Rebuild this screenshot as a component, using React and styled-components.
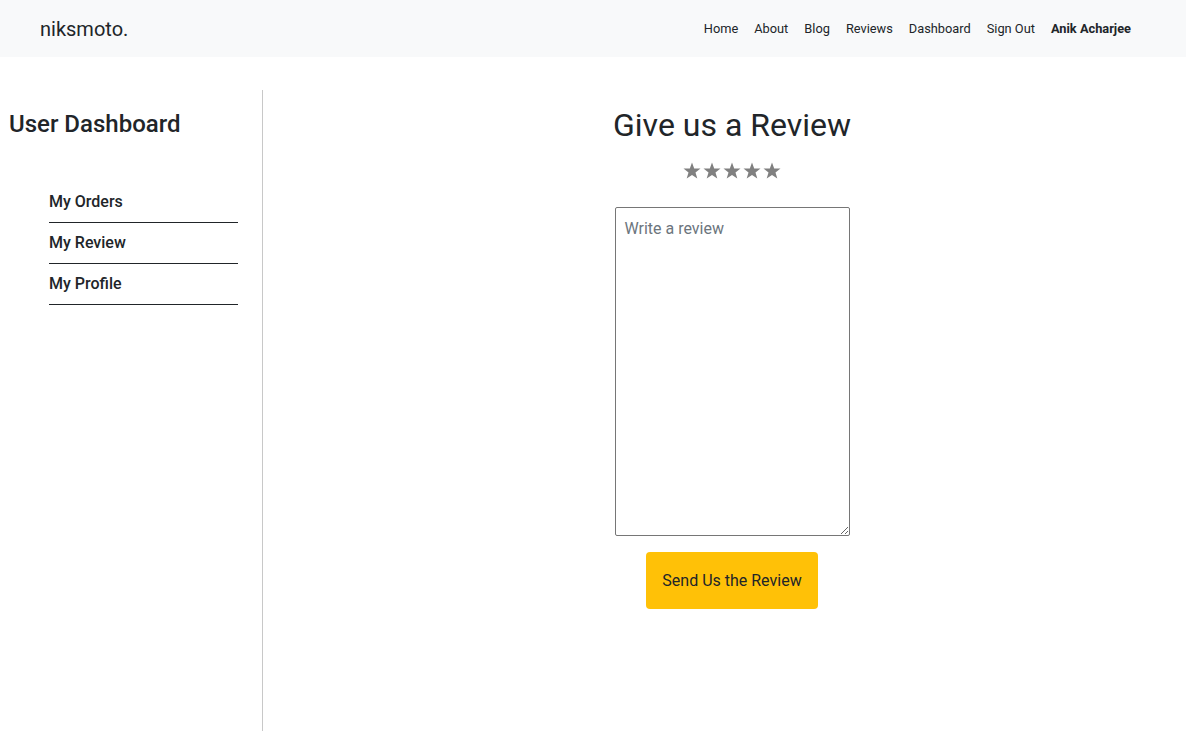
import React from 'react';
import styled, { createGlobalStyle } from 'styled-components';

const GlobalStyle = createGlobalStyle`
  body {
    margin: 0;
    font-family: Roboto, "Liberation Sans", sans-serif;
    color: #212529;
    background: #fff;
  }
`;

const NavBar = styled.nav`
  display: flex;
  align-items: center;
  justify-content: space-between;
  height: 57px;
  padding: 0 55px 0 40px;
  background-color: #f8f9fa;
`;

const Brand = styled.div`
  font-size: 20px;
  color: #212529;
`;

const NavLinks = styled.div`
  display: flex;
  gap: 16px;
  font-size: 12.8px;
`;

const NavLink = styled.a`
  color: #212529;
  text-decoration: none;
  font-weight: ${props => (props.bold ? 700 : 400)};
`;

const Body = styled.div`
  display: flex;
  margin-top: 33px;
`;

const Sidebar = styled.aside`
  width: 262px;
  min-height: calc(100vh - 90px);
  border-right: 1px solid #c8c8c8;
  flex-shrink: 0;
`;

const SideTitle = styled.h2`
  margin: 0;
  padding: 20px 0 0 9px;
  font-size: 24px;
  font-weight: 500;
  line-height: 1.2;
`;

const Menu = styled.ul`
  list-style: none;
  margin: 0;
  padding: 43px 0 0 49px;
  width: 189px;
`;

const MenuItem = styled.li`
  padding: 8px 0 8px;
  font-size: 16px;
  font-weight: 500;
  line-height: 24px;
  border-bottom: 1px solid #212529;
`;

const Main = styled.main`
  flex: 1;
  display: flex;
  flex-direction: column;
  align-items: center;
  padding: 16px 0 0 15px;
`;

const Title = styled.h1`
  margin: 0;
  font-size: 32px;
  font-weight: 400;
  line-height: 1.2;
  color: #212529;
`;

const Stars = styled.div`
  display: flex;
  margin-top: 17px;
  height: 20px;
`;

const ReviewBox = styled.textarea`
  margin-top: 26px;
  width: 235px;
  height: 329px;
  box-sizing: border-box;
  padding: 9px 9px;
  border: 1px solid #767676;
  border-radius: 2px;
  font-family: Roboto, "Liberation Sans", sans-serif;
  font-size: 16px;
  line-height: 24px;
  color: #212529;
  &::placeholder {
    color: #6c757d;
  }
`;

const SendButton = styled.button`
  margin-top: 16px;
  padding: 17px 16px 16px;
  border: none;
  border-radius: 4px;
  background-color: #ffc107;
  color: #212529;
  font-family: Roboto, "Liberation Sans", sans-serif;
  font-size: 16px;
  line-height: 24px;
  cursor: pointer;
`;

const Star = () => (
  <svg width="20" height="20" viewBox="0 0 20 20">
    <polygon
      points="10,1.5 12.2,7.4 18.5,7.6 13.5,11.5 15.3,17.6 10,14 4.7,17.6 6.5,11.5 1.5,7.6 7.8,7.4"
      fill="#808080"
    />
  </svg>
);

const links = ['Home', 'About', 'Blog', 'Reviews', 'Dashboard', 'Sign Out'];

export default function App() {
  return (
    <>
      <GlobalStyle />
      <NavBar>
        <Brand>niksmoto.</Brand>
        <NavLinks>
          {links.map(l => (
            <NavLink key={l} href="#">{l}</NavLink>
          ))}
          <NavLink bold href="#">Anik Acharjee</NavLink>
        </NavLinks>
      </NavBar>
      <Body>
        <Sidebar>
          <SideTitle>User Dashboard</SideTitle>
          <Menu>
            <MenuItem>My Orders</MenuItem>
            <MenuItem>My Review</MenuItem>
            <MenuItem>My Profile</MenuItem>
          </Menu>
        </Sidebar>
        <Main>
          <Title>Give us a Review</Title>
          <Stars>
            {[0, 1, 2, 3, 4].map(i => <Star key={i} />)}
          </Stars>
          <ReviewBox placeholder="Write a review" />
          <SendButton>Send Us the Review</SendButton>
        </Main>
      </Body>
    </>
  );
}
